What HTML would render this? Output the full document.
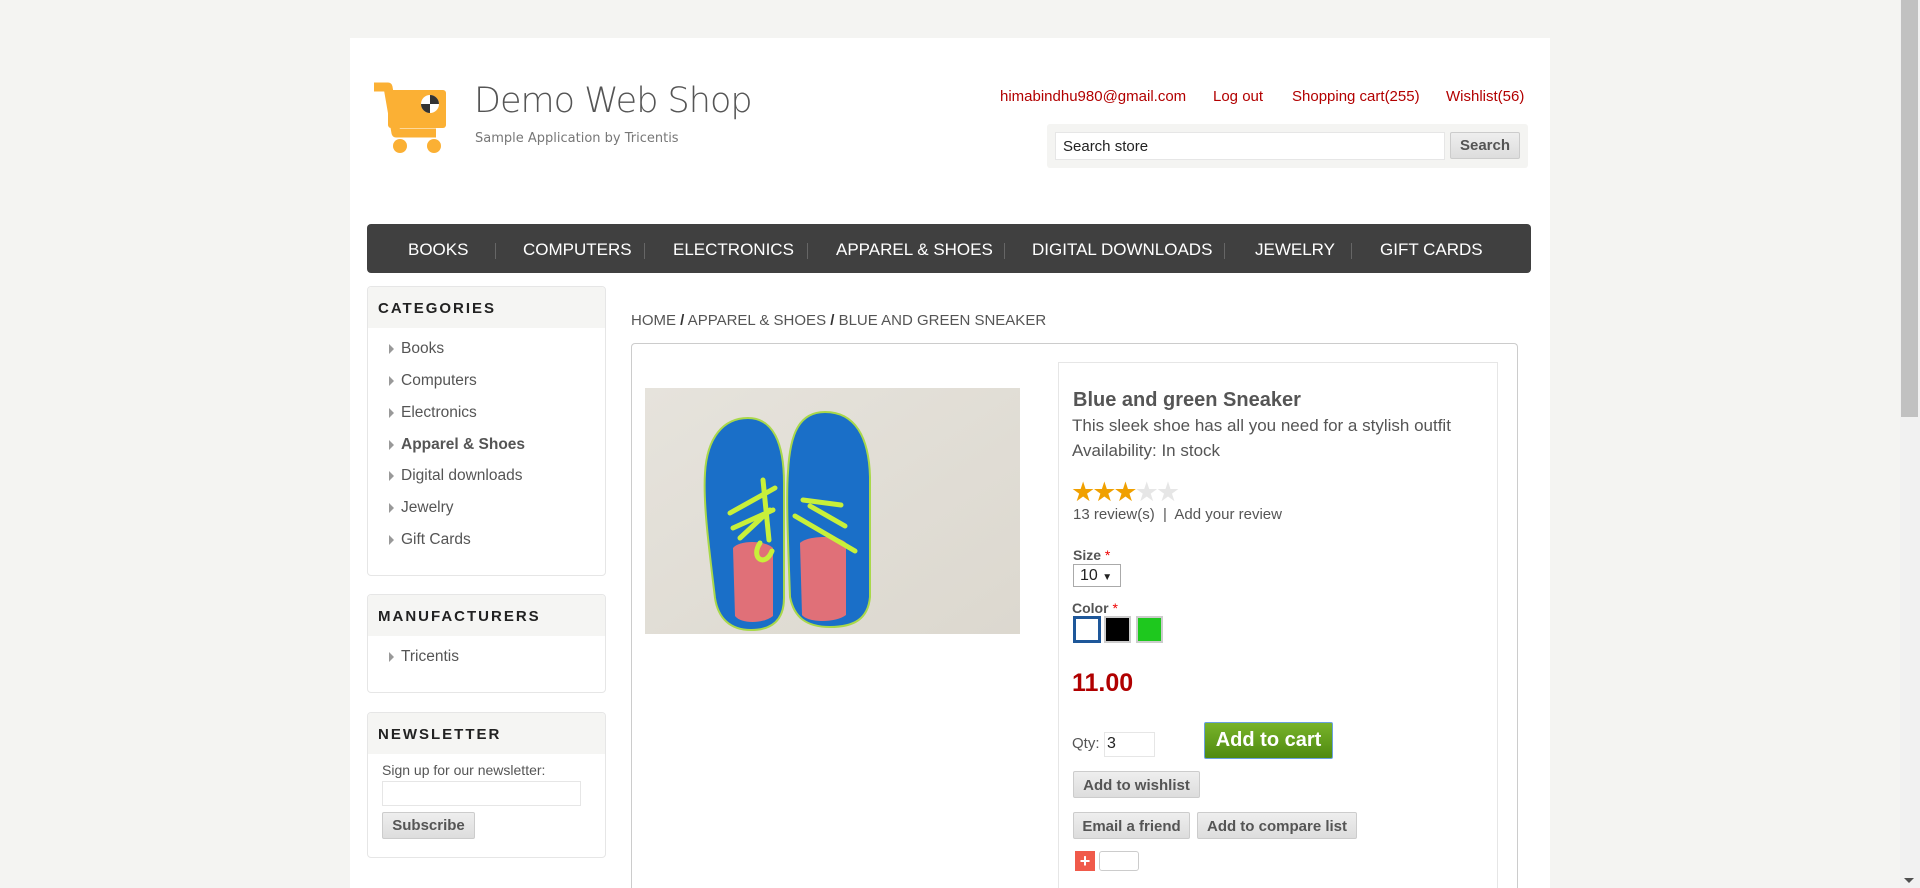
<!DOCTYPE html>
<html><head><meta charset="utf-8"><style>
*{margin:0;padding:0;box-sizing:border-box}
html,body{width:1920px;height:888px;overflow:hidden}
body{background:#f4f4f2;font-family:"Liberation Sans",Arial,sans-serif;position:relative;color:#555}
.a{position:absolute;white-space:nowrap}
.wrap{position:absolute;left:350px;top:38px;width:1200px;height:850px;background:#fff}
.hl{color:#b20000;font-size:15px;top:88px}
.nav{left:367px;top:224px;width:1164px;height:49px;background:#404040;border-radius:4px}
.nv{color:#fff;font-size:17px;top:240px}
.sep{width:1px;height:16px;background:#666;top:243px}
.blk{position:absolute;left:367px;width:239px;border:1px solid #e6e6e6;border-radius:4px;overflow:hidden}
.bh{height:41px;background:#f5f5f3;font-weight:bold;font-size:15px;letter-spacing:2px;color:#222;padding:13px 0 0 10px}
.ci{position:absolute;left:33px;font-size:15.5px;color:#555}
.ci:before{content:"";position:absolute;left:-12px;top:4px;border-left:5px solid #999;border-top:5px solid transparent;border-bottom:5px solid transparent}
.btn{position:absolute;background:linear-gradient(#eee,#ddd);border:1px solid #ccc;border-radius:2px;font-weight:bold;color:#555;font-size:15px;text-align:center}
</style></head><body>
<div class="wrap"></div>
<div class="a" style="left:1900px;top:0;width:20px;height:888px;background:#f1f1f1"></div>
<div class="a" style="left:1901px;top:0;width:17px;height:417px;background:#c1c1c1"></div>
<div class="a" style="left:1904px;top:878px;border-top:5px solid #505050;border-left:5px solid transparent;border-right:5px solid transparent"></div>
<svg class="a" style="left:372px;top:82px" width="85" height="72" viewBox="0 0 85 72">
<path d="M2 5h14l8 46h40" stroke="#fbb034" stroke-width="9" fill="none" stroke-linejoin="round"/>
<rect x="16" y="8" width="58" height="38" rx="3" fill="#fbb034"/>
<circle cx="58" cy="22" r="9" fill="#fff"/><path d="M58 13a9 9 0 0 1 9 9h-9zM58 31a9 9 0 0 1-9-9h9z" fill="#333"/>
<circle cx="28" cy="64" r="7" fill="#fbb034"/><circle cx="62" cy="64" r="7" fill="#fbb034"/>
</svg>
<div class="a" style="left:474px;top:81px;font-size:35px;color:#555;font-family:'DejaVu Sans',sans-serif;font-weight:300;letter-spacing:-1px">Demo Web Shop</div>
<div class="a" style="left:475px;top:131px;font-size:13px;color:#777;font-family:'DejaVu Sans',sans-serif">Sample Application by Tricentis</div>
<div class="a hl" style="left:1000px">himabindhu980@gmail.com</div>
<div class="a hl" style="left:1213px">Log out</div>
<div class="a hl" style="left:1292px">Shopping cart(255)</div>
<div class="a hl" style="left:1446px">Wishlist(56)</div>
<div class="a" style="left:1047px;top:124px;width:481px;height:44px;background:#f4f4f2;border-radius:3px"></div>
<div class="a" style="left:1055px;top:132px;width:390px;height:28px;background:#fff;border:1px solid #e6e6e6;font-size:15px;color:#222;padding:5px 7px">Search store</div>
<div class="btn" style="left:1450px;top:132px;width:70px;height:27px;padding-top:4px">Search</div>
<div class="a nav"></div>
<div class="a nv" style="left:408px">BOOKS</div><div class="a sep" style="left:495px"></div>
<div class="a nv" style="left:523px">COMPUTERS</div><div class="a sep" style="left:644px"></div>
<div class="a nv" style="left:673px">ELECTRONICS</div><div class="a sep" style="left:807px"></div>
<div class="a nv" style="left:836px">APPAREL &amp; SHOES</div><div class="a sep" style="left:1004px"></div>
<div class="a nv" style="left:1032px">DIGITAL DOWNLOADS</div><div class="a sep" style="left:1224px"></div>
<div class="a nv" style="left:1255px">JEWELRY</div><div class="a sep" style="left:1351px"></div>
<div class="a nv" style="left:1380px">GIFT CARDS</div>
<div class="blk" style="top:286px;height:290px"><div class="bh">CATEGORIES</div>
<div class="ci" style="top:53px">Books</div><div class="ci" style="top:85px">Computers</div><div class="ci" style="top:117px">Electronics</div>
<div class="ci" style="top:149px;font-weight:bold">Apparel &amp; Shoes</div><div class="ci" style="top:180px">Digital downloads</div>
<div class="ci" style="top:212px">Jewelry</div><div class="ci" style="top:244px">Gift Cards</div></div>
<div class="blk" style="top:594px;height:99px"><div class="bh">MANUFACTURERS</div><div class="ci" style="top:53px">Tricentis</div></div>
<div class="blk" style="top:712px;height:146px"><div class="bh">NEWSLETTER</div>
<div class="a" style="left:14px;top:49px;font-size:14px">Sign up for our newsletter:</div>
<div class="a" style="left:14px;top:68px;width:199px;height:25px;border:1px solid #e6e6e6"></div>
<div class="btn" style="left:14px;top:99px;width:93px;height:27px;padding-top:4px">Subscribe</div></div>
<div class="a" style="left:631px;top:312px;font-size:15px;color:#555">HOME <b style="color:#333">/</b> APPAREL &amp; SHOES <b style="color:#333">/</b> BLUE AND GREEN SNEAKER</div>
<div class="a" style="left:631px;top:343px;width:887px;height:545px;border:1px solid #ccc;border-bottom:none;border-radius:4px 4px 0 0"></div>
<svg class="a" style="left:645px;top:388px" width="375" height="246" viewBox="0 0 375 246">
<defs><linearGradient id="g" x1="0" y1="0" x2="1" y2="1"><stop offset="0" stop-color="#e6e3dc"/><stop offset="1" stop-color="#dcd8cf"/></linearGradient></defs>
<rect width="375" height="246" fill="url(#g)"/>
<path d="M103 30c25 0 36 25 36 65v115c0 22-12 32-33 32s-33-12-36-32c-6-50-12-95-10-125 2-35 18-55 43-55z" fill="#1a6fc8" stroke="#a9d84a" stroke-width="2"/>
<path d="M180 24c30 0 44 25 45 65v120c-2 22-16 30-40 30s-36-10-40-30c-2-55-4-100-2-125 2-40 12-60 37-60z" fill="#1a6fc8" stroke="#a9d84a" stroke-width="2"/>
<path d="M88 160c6-8 32-8 40 0v68c-10 8-32 8-38 0z" fill="#e07078"/>
<path d="M155 155c8-8 40-8 46 0v72c-10 8-38 8-44 0z" fill="#e07078"/>
<path d="M85 125l45-25M88 140l40-18M95 150l30-28M118 92l6 60M158 112l38 5M150 128l60 35M165 118l35 20M115 155c-10 15 5 25 12 8" stroke="#c8f03a" stroke-width="5" stroke-linecap="round" fill="none"/>
</svg>
<div class="a" style="left:1058px;top:362px;width:440px;height:526px;border:1px solid #e6e6e6;border-bottom:none"></div>
<div class="a" style="left:1073px;top:389px;font-size:20px;font-weight:bold;color:#555">Blue and green Sneaker</div>
<div class="a" style="left:1072px;top:416px;font-size:17px">This sleek shoe has all you need for a stylish outfit</div>
<div class="a" style="left:1072px;top:441px;font-size:17px">Availability: In stock</div>
<div class="a" style="left:1071px;top:479px;font-size:27px;line-height:27px;letter-spacing:-3px"><span style="color:#f0a000">★★★</span><span style="color:#e6e6e6">★★</span></div>
<div class="a" style="left:1073px;top:506px;font-size:15px">13 review(s) &nbsp;|&nbsp; Add your review</div>
<div class="a" style="left:1073px;top:547px;font-size:14px;font-weight:bold">Size <span style="color:#e00;font-weight:normal">*</span></div>
<div class="a" style="left:1073px;top:564px;width:48px;height:23px;border:1px solid #aaa;font-size:16px;color:#222;padding:2px 6px">10 <span style="font-size:10px">▼</span></div>
<div class="a" style="left:1072px;top:600px;font-size:14px;font-weight:bold">Color <span style="color:#e00;font-weight:normal">*</span></div>
<div class="a" style="left:1073px;top:616px;width:28px;height:27px;border:3px solid #1e5799;background:#fff"></div>
<div class="a" style="left:1104px;top:616px;width:27px;height:27px;border:2px solid #ccc;background:#000"></div>
<div class="a" style="left:1136px;top:616px;width:27px;height:27px;border:2px solid #ccc;background:#1ec81e"></div>
<div class="a" style="left:1072px;top:669px;font-size:25px;font-weight:bold;color:#b00000">11.00</div>
<div class="a" style="left:1072px;top:735px;font-size:15px">Qty:</div>
<div class="a" style="left:1104px;top:732px;width:51px;height:25px;border:1px solid #e6e6e6;font-size:16px;color:#222;padding:2px 2px">3</div>
<div class="a" style="left:1204px;top:722px;width:129px;height:37px;background:linear-gradient(#78b32a,#4f8a10);border:1px solid #6aa0e0;color:#fff;font-weight:bold;font-size:20px;text-align:center;padding-top:6px;border-radius:2px">Add to cart</div>
<div class="btn" style="left:1073px;top:771px;width:127px;height:27px;padding-top:5px">Add to wishlist</div>
<div class="btn" style="left:1073px;top:812px;width:117px;height:27px;padding-top:5px">Email a friend</div>
<div class="btn" style="left:1197px;top:812px;width:160px;height:27px;padding-top:5px">Add to compare list</div>
<div class="a" style="left:1075px;top:851px;width:20px;height:20px;background:#f05a4a;color:#fff;font-weight:bold;font-size:18px;line-height:20px;text-align:center">+</div>
<div class="a" style="left:1099px;top:851px;width:40px;height:20px;border:1px solid #ccc;border-radius:3px"></div>
</body></html>
